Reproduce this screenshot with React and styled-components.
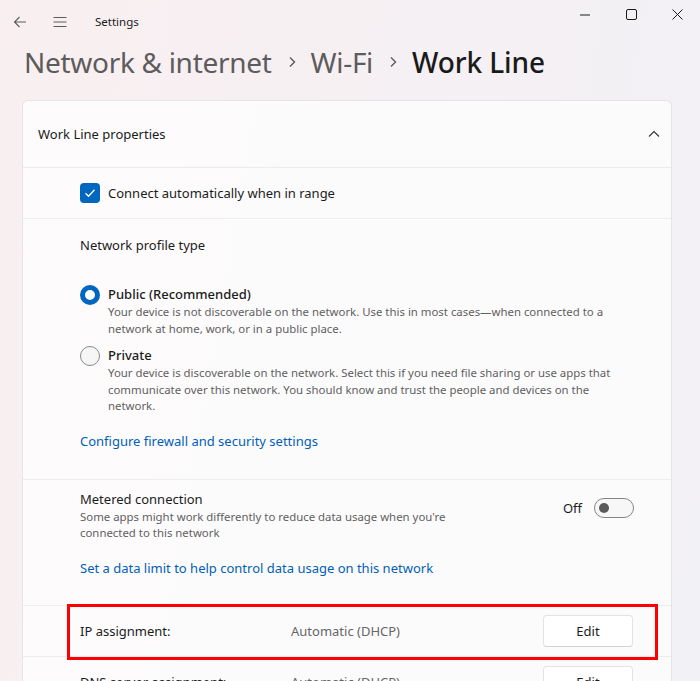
import React from 'react';
import styled, { createGlobalStyle } from 'styled-components';

const Global = createGlobalStyle`
  html, body {
    margin: 0;
    padding: 0;
  }
  body {
    font-family: "Noto Sans", "Segoe UI", sans-serif;
    color: #1b1b1b;
  }
`;

const St = {
  Window: styled.div`
    width: 700px;
    height: 681px;
    overflow: hidden;
    background: linear-gradient(100deg, #f9eff0 0%, #f5f0f3 50%, #f2f1f6 100%);
    display: flex;
    flex-direction: column;
  `,
  TitleBar: styled.div`
    height: 44px;
    display: flex;
    align-items: flex-start;
  `,
  NavBtn: styled.div`
    width: 40px;
    height: 44px;
    display: flex;
    align-items: center;
    justify-content: center;
    color: #5c5c5c;
  `,
  AppName: styled.div`
    font-size: 11.5px;
    line-height: 44px;
    margin-left: 15px;
    color: #1b1b1b;
  `,
  Controls: styled.div`
    margin-left: auto;
    display: flex;
  `,
  CtrlBtn: styled.div`
    width: 46px;
    height: 29px;
    display: flex;
    align-items: center;
    justify-content: center;
    color: #1b1b1b;
  `,
  Crumbs: styled.div`
    display: flex;
    align-items: center;
    padding: 0 0 0 24px;
    height: 36px;
    margin-bottom: 20px;
  `,
  Crumb: styled.span`
    font-size: 28px;
    font-weight: ${p => (p.$current ? 500 : 400)};
    color: ${p => (p.$current ? '#1a1a1a' : '#5d5b5c')};
    letter-spacing: ${p => (p.$current ? '-0.1px' : '-0.3px')};
  `,
  Sep: styled.span`
    display: flex;
    align-items: center;
    margin: 0 15px 0 16px;
    color: #5d5b5c;
  `,
  Card: styled.div`
    width: 650px;
    box-sizing: border-box;
    margin-left: 22px;
    background: rgba(253, 252, 253, 0.9);
    border: 1px solid #e6e4e6;
    border-bottom: none;
    border-radius: 6px 6px 0 0;
    flex: 1;
    overflow: hidden;
  `,
  Header: styled.div`
    height: 66px;
    display: flex;
    align-items: center;
    padding: 0 5px 0 15px;
    font-size: 13px;
    border-bottom: 1px solid #ebebeb;
  `,
  Chevron: styled.div`
    margin-left: auto;
    width: 24px;
    display: flex;
    justify-content: center;
    color: #333;
  `,
  Section: styled.div`
    padding: ${p => p.$pad || '0'};
    padding-left: 57px;
    padding-right: 37px;
    border-bottom: 1px solid #ededed;
    position: relative;
  `,
  Row: styled.div`
    display: flex;
    align-items: center;
    height: ${p => p.$h || 50}px;
  `,
  Check: styled.div`
    width: 20px;
    height: 20px;
    border-radius: 4px;
    background: #0067c0;
    display: flex;
    align-items: center;
    justify-content: center;
    margin-right: 8px;
  `,
  Label: styled.div`
    font-size: 13px;
    line-height: 19px;
    font-weight: ${p => p.$w || 400};
    color: #1b1b1b;
  `,
  Radio: styled.div`
    width: 20px;
    height: 20px;
    box-sizing: border-box;
    border-radius: 50%;
    flex: none;
    border: ${p => (p.$on ? '5px solid #0067c0' : '1px solid #8a8a8a')};
    background: ${p => (p.$on ? '#fff' : '#f6f6f6')};
  `,
  Option: styled.div`
    display: flex;
    gap: 8px;
    margin-bottom: ${p => p.$mb || 0}px;
  `,
  OptText: styled.div`
    display: flex;
    flex-direction: column;
  `,
  Desc: styled.div`
    font-size: 11.4px;
    line-height: 16.5px;
    color: #5f5f5f;
    max-width: ${p => p.$max || 520}px;
  `,
  Link: styled.a`
    display: block;
    font-size: 13px;
    line-height: 19px;
    color: #005fb8;
    text-decoration: none;
  `,
  Metered: styled.div`
    display: flex;
    align-items: flex-start;
  `,
  MeterText: styled.div`
    flex: 1;
  `,
  ToggleWrap: styled.div`
    display: flex;
    align-items: center;
    gap: 12px;
    margin-top: 8px;
    font-size: 13px;
  `,
  Toggle: styled.div`
    width: 40px;
    height: 20px;
    box-sizing: border-box;
    border: 1px solid #858585;
    border-radius: 10px;
    background: #f7f7f7;
    position: relative;
    &::after {
      content: '';
      position: absolute;
      left: 4px;
      top: 4px;
      width: 10px;
      height: 10px;
      border-radius: 50%;
      background: #5a5a5a;
    }
  `,
  Key: styled.div`
    width: 211px;
    font-size: 13px;
  `,
  Value: styled.div`
    flex: 1;
    font-size: 13px;
    color: #666;
  `,
  EditBtn: styled.button`
    width: 90px;
    height: 32px;
    font-family: inherit;
    font-size: 13px;
    color: #1b1b1b;
    background: #fff;
    border: 1px solid #e3e3e3;
    border-bottom-color: #d2d2d2;
    border-radius: 4px;
    margin-right: 1px;
  `,
  Highlight: styled.div`
    position: absolute;
    left: 44px;
    top: -2px;
    width: 591px;
    height: 56px;
    box-sizing: border-box;
    border: 3px solid #ff0000;
    pointer-events: none;
  `,
};

const Icon = {
  Back: () => (
    <svg width="16" height="16" viewBox="0 0 16 16" fill="none" stroke="currentColor" strokeWidth="1.1">
      <path d="M14 8H2.5M7.5 3L2.5 8l5 5" />
    </svg>
  ),
  Menu: () => (
    <svg width="16" height="16" viewBox="0 0 16 16" fill="none" stroke="currentColor" strokeWidth="1.1">
      <path d="M1.5 3.5h13M1.5 8h13M1.5 12.5h13" />
    </svg>
  ),
  Min: () => (
    <svg width="10" height="10" viewBox="0 0 10 10" stroke="currentColor" strokeWidth="1">
      <path d="M0 5h10" />
    </svg>
  ),
  Max: () => (
    <svg width="11" height="11" viewBox="0 0 11 11" fill="none" stroke="currentColor" strokeWidth="1">
      <rect x="0.5" y="0.5" width="10" height="10" rx="1.5" />
    </svg>
  ),
  Close: () => (
    <svg width="11" height="11" viewBox="0 0 11 11" fill="none" stroke="currentColor" strokeWidth="1">
      <path d="M0.5 0.5l10 10M10.5 0.5l-10 10" />
    </svg>
  ),
  Right: () => (
    <svg width="8" height="12" viewBox="0 0 8 12" fill="none" stroke="currentColor" strokeWidth="1.4">
      <path d="M2 1.5L6.5 6 2 10.5" />
    </svg>
  ),
  Up: () => (
    <svg width="12" height="8" viewBox="0 0 12 8" fill="none" stroke="currentColor" strokeWidth="1.1">
      <path d="M1 6.5L6 1.5l5 5" />
    </svg>
  ),
  Tick: () => (
    <svg width="12" height="10" viewBox="0 0 12 10" fill="none" stroke="#fff" strokeWidth="1.3">
      <path d="M1.5 5.2L4.5 8.2 10.5 1.8" />
    </svg>
  ),
};

export default function App() {
  return (
    <>
      <Global />
      <St.Window>
        <St.TitleBar>
          <St.NavBtn><Icon.Back /></St.NavBtn>
          <St.NavBtn><Icon.Menu /></St.NavBtn>
          <St.AppName>Settings</St.AppName>
          <St.Controls>
            <St.CtrlBtn><Icon.Min /></St.CtrlBtn>
            <St.CtrlBtn><Icon.Max /></St.CtrlBtn>
            <St.CtrlBtn><Icon.Close /></St.CtrlBtn>
          </St.Controls>
        </St.TitleBar>

        <St.Crumbs>
          <St.Crumb>Network &amp; internet</St.Crumb>
          <St.Sep><Icon.Right /></St.Sep>
          <St.Crumb>Wi-Fi</St.Crumb>
          <St.Sep><Icon.Right /></St.Sep>
          <St.Crumb $current>Work Line</St.Crumb>
        </St.Crumbs>

        <St.Card>
          <St.Header>
            Work Line properties
            <St.Chevron><Icon.Up /></St.Chevron>
          </St.Header>

          <St.Section>
            <St.Row $h={50}>
              <St.Check><Icon.Tick /></St.Check>
              <St.Label>Connect automatically when in range</St.Label>
            </St.Row>
          </St.Section>

          <St.Section $pad="17px 0 28px">
            <St.Label>Network profile type</St.Label>
            <div style={{ height: 30 }} />
            <St.Option $mb={9}>
              <St.Radio $on />
              <St.OptText>
                <St.Label $w={500}>Public (Recommended)</St.Label>
                <St.Desc>
                  Your device is not discoverable on the network. Use this in most cases—when connected to a
                  network at home, work, or in a public place.
                </St.Desc>
              </St.OptText>
            </St.Option>
            <St.Option $mb={17}>
              <St.Radio />
              <St.OptText>
                <St.Label $w={500}>Private</St.Label>
                <St.Desc>
                  Your device is discoverable on the network. Select this if you need file sharing or use apps that
                  communicate over this network. You should know and trust the people and devices on the
                  network.
                </St.Desc>
              </St.OptText>
            </St.Option>
            <St.Link href="#">Configure firewall and security settings</St.Link>
          </St.Section>

          <St.Section $pad="10px 0 27px">
            <St.Metered>
              <St.MeterText>
                <St.Label>Metered connection</St.Label>
                <St.Desc $max={380}>
                  Some apps might work differently to reduce data usage when you're connected to this network
                </St.Desc>
              </St.MeterText>
              <St.ToggleWrap>
                Off
                <St.Toggle />
              </St.ToggleWrap>
            </St.Metered>
            <div style={{ height: 17 }} />
            <St.Link href="#">Set a data limit to help control data usage on this network</St.Link>
          </St.Section>

          <St.Section>
            <St.Row $h={50}>
              <St.Key>IP assignment:</St.Key>
              <St.Value>Automatic (DHCP)</St.Value>
              <St.EditBtn>Edit</St.EditBtn>
            </St.Row>
            <St.Highlight />
          </St.Section>

          <St.Section>
            <St.Row $h={50}>
              <St.Key>DNS server assignment:</St.Key>
              <St.Value>Automatic (DHCP)</St.Value>
              <St.EditBtn>Edit</St.EditBtn>
            </St.Row>
          </St.Section>
        </St.Card>
      </St.Window>
    </>
  );
}
